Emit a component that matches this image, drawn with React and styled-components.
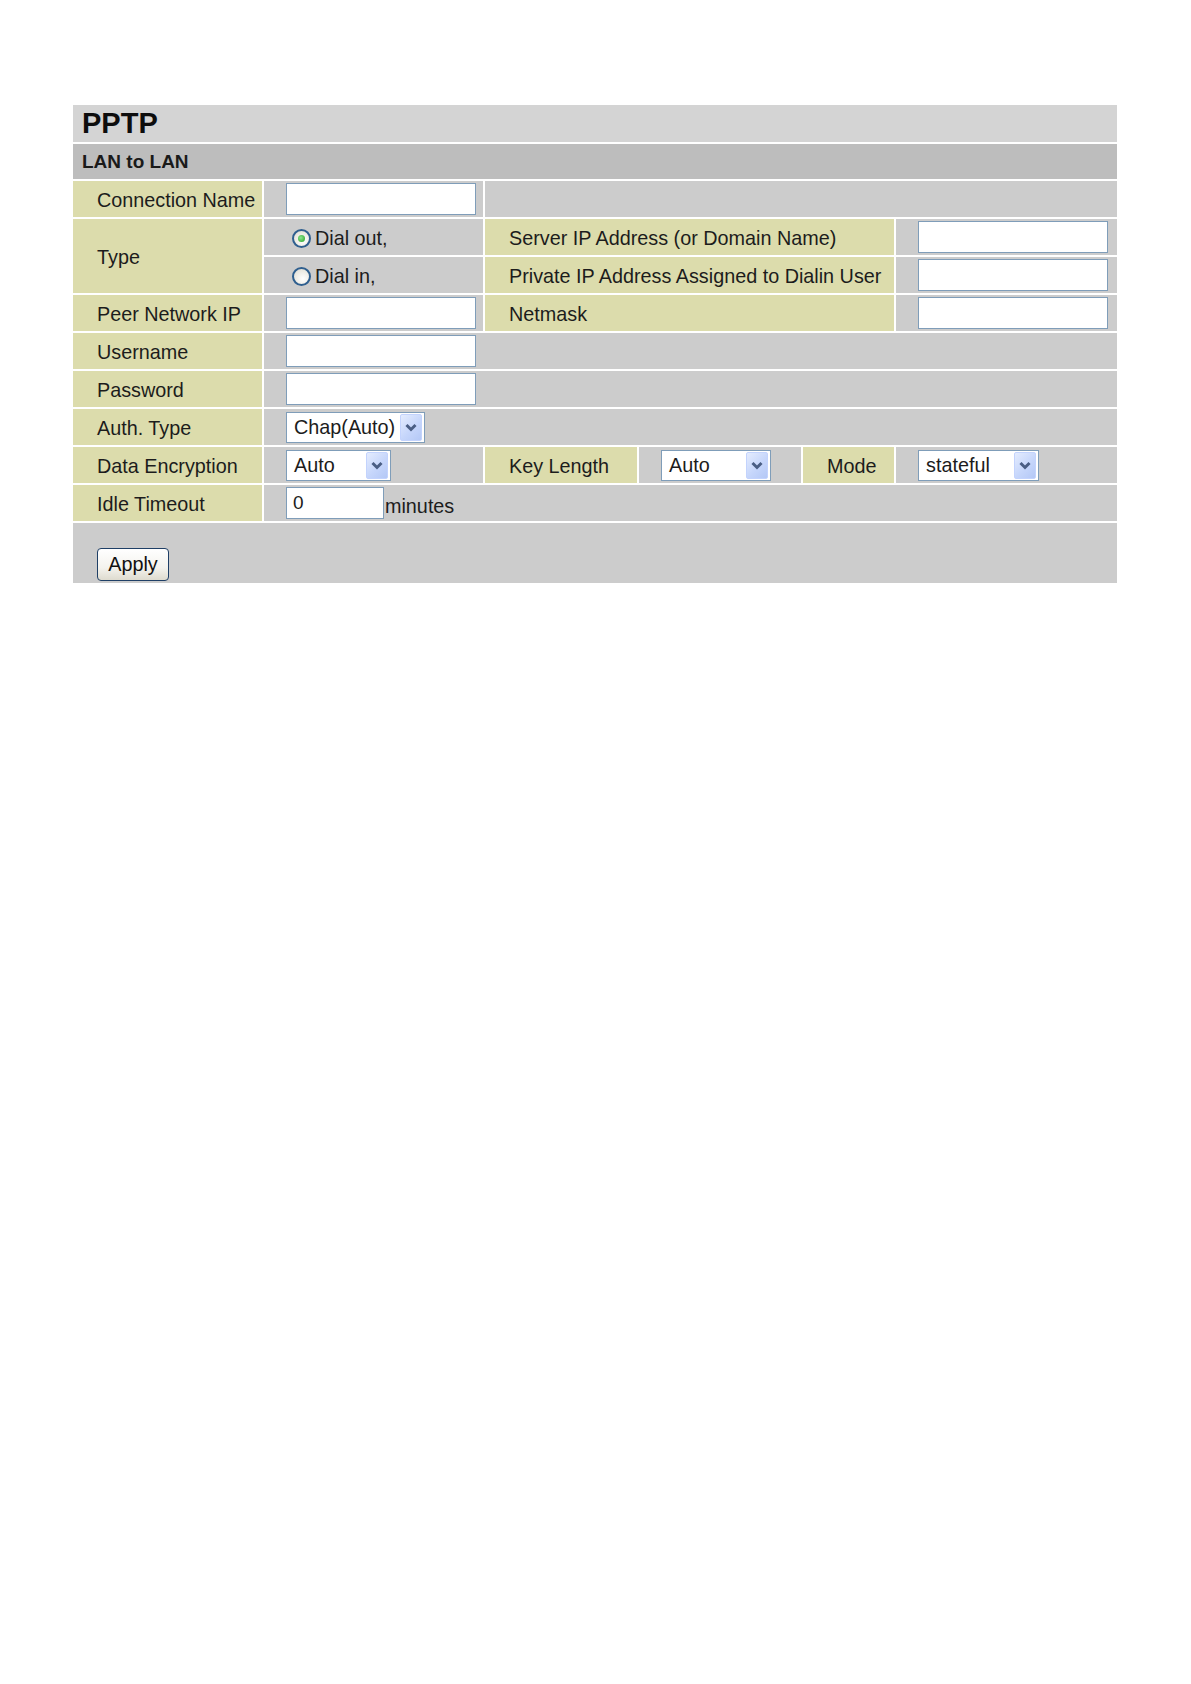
import React from 'react'
import styled, { createGlobalStyle, css } from 'styled-components'

const GlobalStyle = createGlobalStyle`
    html, body {
        margin: 0;
        padding: 0;
        background: #ffffff;
    }
    body {
        font-family: "Liberation Sans", Arial, sans-serif;
        color: #1c1c1c;
    }
`

const Page = styled.div`
    padding: 105px 0 0 73px;
    min-height: 1684px;
    box-sizing: border-box;
`

const Grid = styled.div`
    display: grid;
    grid-template-columns: 189px 219px 152px 162px 91px 221px;
    grid-template-rows: 37px 35px repeat(9, 36px) 60px;
    gap: 2px;
    width: 1044px;
    background: #ffffff;
`

const tones = {
    title: css`
        background: #d4d4d4;
        font-size: 29px;
        font-weight: bold;
        color: #0d0d0d;
        padding-left: 9px;
    `,
    sub: css`
        background: #bdbdbd;
        font-size: 19px;
        font-weight: bold;
        color: #1a1a1a;
        padding-left: 9px;
    `,
    label: css`
        background: #dcdcac;
        padding-left: 24px;
        padding-top: 2px;
    `,
    field: css`
        background: #cccccc;
        padding-left: 22px;
    `,
    footer: css`
        background: #cccccc;
        padding-left: 24px;
        align-items: flex-end;
        padding-bottom: 1px;
    `
}

const Cell = styled.div`
    display: flex;
    align-items: center;
    box-sizing: border-box;
    font-size: 19.8px;
    white-space: nowrap;
    grid-column: span ${p => p.$span || 1};
    grid-row: span ${p => p.$rows || 1};
    ${p => tones[p.$tone || 'field']}
`

const TextBox = styled.div`
    width: ${p => p.$width || 190}px;
    height: 32px;
    box-sizing: border-box;
    border: 1px solid #7f9db9;
    background: #ffffff;
    font-size: 19px;
    display: flex;
    align-items: center;
    padding-left: 6px;
`

const Unit = styled.span`
    font-size: 19.8px;
    align-self: flex-end;
    margin-bottom: 3px;
    margin-left: 1px;
`

const SelectBox = styled.div`
    width: ${p => p.$width}px;
    height: 31px;
    box-sizing: border-box;
    border: 1px solid #7f9db9;
    background: #ffffff;
    display: flex;
    align-items: center;
    justify-content: space-between;
    padding: 1px 2px 1px 7px;
    font-size: 19.8px;
`

const ArrowButton = styled.span`
    width: 22px;
    height: 27px;
    box-sizing: border-box;
    border: 1px solid #c3d3fd;
    border-radius: 2px;
    background: linear-gradient(135deg, #e4ecfe 0%, #c6d6fb 55%, #b4c8f6 100%);
    display: flex;
    align-items: center;
    justify-content: center;
`

const RadioLabel = styled.label`
    display: flex;
    align-items: center;
    gap: 4px;
    font-size: 19.8px;
    margin-left: 6px;
    padding-top: 2px;
`

const RadioDot = styled.span`
    width: 19px;
    height: 19px;
    box-sizing: border-box;
    border-radius: 50%;
    border: 2px solid #2f5f8f;
    background: radial-gradient(circle at 60% 65%, #ffffff 0%, #eceae2 60%, #d6d4ca 100%);
    display: flex;
    align-items: center;
    justify-content: center;
    &::after {
        content: '';
        width: 7px;
        height: 7px;
        border-radius: 50%;
        background: ${p => (p.$checked ? 'radial-gradient(circle at 40% 40%, #8fe58f, #21a121)' : 'transparent')};
    }
`

const ApplyButton = styled.button`
    width: 72px;
    height: 33px;
    margin-bottom: 1px;
    border: 1px solid #1f3f66;
    border-radius: 4px;
    background: linear-gradient(180deg, #ffffff 0%, #f4f3ee 60%, #dedbcf 100%);
    font-family: "Liberation Sans", Arial, sans-serif;
    font-size: 19.8px;
    color: #111;
    padding: 0;
`

const Chevron = () => (
    <svg width="14" height="11" viewBox="0 0 14 11">
        <path d="M2.5 3 L7 7.5 L11.5 3" fill="none" stroke="#4a5e84" strokeWidth="3" />
    </svg>
)

const Select = ({ value, width }) => (
    <SelectBox $width={width}>
        <span>{value}</span>
        <ArrowButton><Chevron /></ArrowButton>
    </SelectBox>
)

const Radio = ({ label, checked }) => (
    <RadioLabel>
        <RadioDot $checked={checked} />
        {label}
    </RadioLabel>
)

const App = () => {
    return (
        <Page>
            <GlobalStyle />
            <Grid>
                <Cell $tone="title" $span={6}>PPTP</Cell>
                <Cell $tone="sub" $span={6}>LAN to LAN</Cell>

                <Cell $tone="label">Connection Name</Cell>
                <Cell><TextBox /></Cell>
                <Cell $span={4} />

                <Cell $tone="label" $rows={2}>Type</Cell>
                <Cell><Radio label="Dial out," checked /></Cell>
                <Cell $tone="label" $span={3}>Server IP Address (or Domain Name)</Cell>
                <Cell><TextBox /></Cell>
                <Cell><Radio label="Dial in," /></Cell>
                <Cell $tone="label" $span={3}>Private IP Address Assigned to Dialin User</Cell>
                <Cell><TextBox /></Cell>

                <Cell $tone="label">Peer Network IP</Cell>
                <Cell><TextBox /></Cell>
                <Cell $tone="label" $span={3}>Netmask</Cell>
                <Cell><TextBox /></Cell>

                <Cell $tone="label">Username</Cell>
                <Cell $span={5}><TextBox /></Cell>

                <Cell $tone="label">Password</Cell>
                <Cell $span={5}><TextBox /></Cell>

                <Cell $tone="label">Auth. Type</Cell>
                <Cell $span={5}><Select value="Chap(Auto)" width={139} /></Cell>

                <Cell $tone="label">Data Encryption</Cell>
                <Cell><Select value="Auto" width={105} /></Cell>
                <Cell $tone="label">Key Length</Cell>
                <Cell><Select value="Auto" width={110} /></Cell>
                <Cell $tone="label">Mode</Cell>
                <Cell><Select value="stateful" width={121} /></Cell>

                <Cell $tone="label">Idle Timeout</Cell>
                <Cell $span={5}>
                    <TextBox $width={98}>0</TextBox>
                    <Unit>minutes</Unit>
                </Cell>

                <Cell $tone="footer" $span={6}>
                    <ApplyButton>Apply</ApplyButton>
                </Cell>
            </Grid>
        </Page>
    )
}

export default App
